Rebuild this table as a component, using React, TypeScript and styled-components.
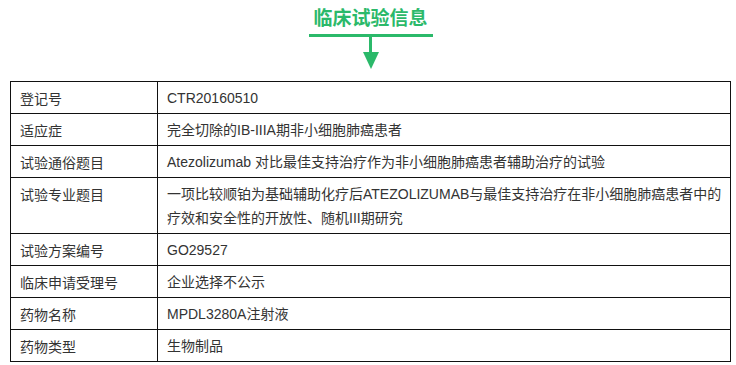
import styled, { createGlobalStyle } from "styled-components";

const GlobalStyle = createGlobalStyle`
  html, body {
    margin: 0;
    padding: 0;
    background: #fff;
  }
  body {
    font-family: "Liberation Sans", "Noto Sans CJK SC", Arial, sans-serif;
    color: #333;
  }
`;

const green = "#2bb96a";

const Page = styled.div`
  width: 721px;
  padding: 4px 0 0 10px;
`;

const Heading = styled.div`
  display: flex;
  flex-direction: column;
  align-items: center;
`;

const Title = styled.h1`
  margin: 0;
  font-family: "Noto Sans CJK SC", sans-serif;
  font-size: 19px;
  line-height: 26px;
  font-weight: 700;
  color: ${green};
`;

const Underline = styled.div`
  width: 124px;
  height: 3px;
  margin-top: 4px;
  background: ${green};
`;

const Stem = styled.div`
  width: 3px;
  height: 15px;
  background: ${green};
`;

const ArrowHead = styled.div`
  width: 0;
  height: 0;
  border-left: 8.5px solid transparent;
  border-right: 8.5px solid transparent;
  border-top: 17px solid ${green};
`;

const InfoTable = styled.table`
  width: 721px;
  margin-top: 12px;
  border-collapse: collapse;
  table-layout: fixed;
  font-size: 14px;
  line-height: 24px;
`;

const LabelCell = styled.td`
  border: 1px solid #111;
  padding: 4px 9px 3px;
  vertical-align: top;
  font-family: "Noto Sans CJK SC", sans-serif;
`;

const ValueCell = styled.td`
  border: 1px solid #111;
  padding: 4px 9px 3px;
  vertical-align: top;
`;

const Line = styled.span`
  display: block;
  white-space: nowrap;
`;

const rows: { label: string; value: React.ReactNode }[] = [
  { label: "登记号", value: "CTR20160510" },
  { label: "适应症", value: "完全切除的IB-IIIA期非小细胞肺癌患者" },
  {
    label: "试验通俗题目",
    value: "Atezolizumab 对比最佳支持治疗作为非小细胞肺癌患者辅助治疗的试验",
  },
  {
    label: "试验专业题目",
    value: (
      <>
        <Line>一项比较顺铂为基础辅助化疗后ATEZOLIZUMAB与最佳支持治疗在非小细胞肺癌患者中的</Line>
        <Line>疗效和安全性的开放性、随机III期研究</Line>
      </>
    ),
  },
  { label: "试验方案编号", value: "GO29527" },
  { label: "临床申请受理号", value: "企业选择不公示" },
  { label: "药物名称", value: "MPDL3280A注射液" },
  { label: "药物类型", value: "生物制品" },
];

const App = () => {
  return (
    <Page>
      <GlobalStyle />
      {/* heading with arrow */}
      <Heading>
        <Title>临床试验信息</Title>
        <Underline />
        <Stem />
        <ArrowHead />
      </Heading>
      <InfoTable>
        <colgroup>
          <col style={{ width: 147 }} />
          <col />
        </colgroup>
        <tbody>
          {rows.map((row) => (
            <tr key={row.label}>
              <LabelCell>{row.label}</LabelCell>
              <ValueCell>{row.value}</ValueCell>
            </tr>
          ))}
        </tbody>
      </InfoTable>
    </Page>
  );
};

export default App;
